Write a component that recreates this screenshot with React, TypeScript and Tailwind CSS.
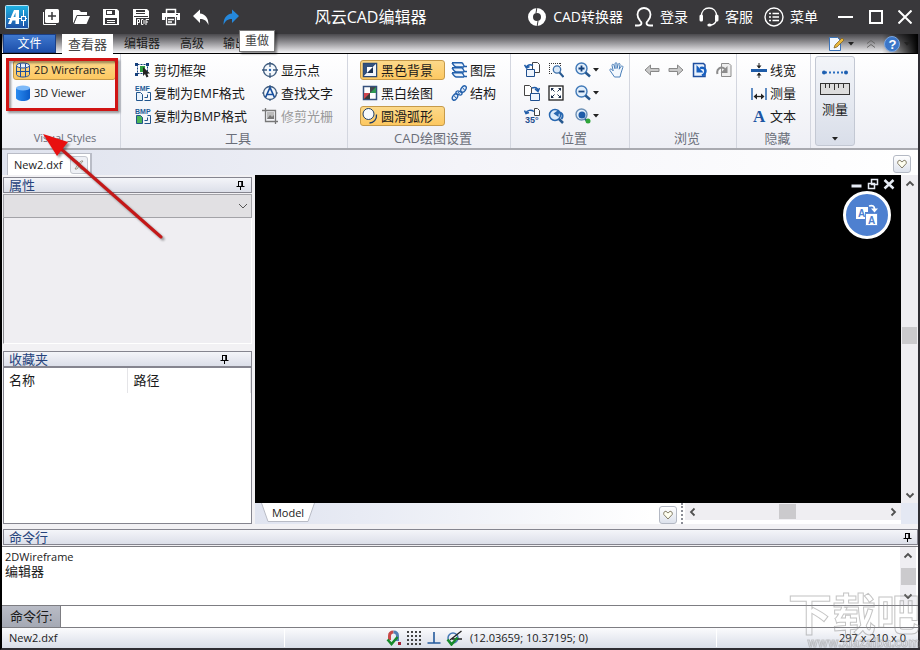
import type { ReactNode } from "react";
import clsx from "clsx";

type SvgProps = {
  size?: number;
  box?: number;
  children: ReactNode;
};

function Svg({ size = 16, box = 16, children }: SvgProps) {
  return (
    <svg width={size} height={size} viewBox={`0 0 ${box} ${box}`} fill="none" className="shrink-0" aria-hidden="true">
      {children}
    </svg>
  );
}

/* ---------- title bar icons ---------- */

const LogoIcon = () => (
  <Svg size={24} box={24}>
    <defs>
      <linearGradient id="logo" x1="0" y1="0" x2="0" y2="1">
        <stop offset="0" stopColor="#1fb4e4" />
        <stop offset="1" stopColor="#1c4fa6" />
      </linearGradient>
    </defs>
    <rect x="0.5" y="0.5" width="23" height="23" rx="1" fill="url(#logo)" stroke="#bfe3f5" />
    <path d="M3 19 9 5h5v14h-3.500v-3.500H7.500L6 19z" fill="#fff" />
    <path d="M8.500 12l2-4.500V12z" fill="#2492cf" />
    <path d="M3 13.500h19M18.500 5v16" stroke="#fff" />
    <rect x="16.500" y="11.500" width="4" height="4" stroke="#fff" fill="#2275c2" />
  </Svg>
);

const NewIcon = () => (
  <Svg size={18} box={18}>
    <rect x="3" y="1" width="14" height="14" rx="1.500" fill="#fff" />
    <path d="M1.500 4v12.500H14" stroke="#fff" />
    <path d="M10 4v8M6 8h8" stroke="#39383b" strokeWidth="1.500" />
  </Svg>
);

const OpenIcon = () => (
  <Svg size={20} box={20}>
    <path d="M2 17V3h6l2 2h6v3H6z" fill="#fff" />
    <path d="M6 9h13l-3.500 8H3z" fill="#fff" />
    <path d="M2.500 17 6 8.500h12" stroke="#39383b" strokeWidth="0.800" />
  </Svg>
);

const SaveIcon = () => (
  <Svg>
    <path d="M0 0h14l2 2v14H0z" fill="#fff" />
    <path d="M3 1h9v5H3zM2 9h12v6H2z" fill="#39383b" />
    <path d="M4 2h5v3H4zM4 11h8v1H4zM4 13h8v1H4z" fill="#fff" />
  </Svg>
);

const SavePdfIcon = () => (
  <Svg>
    <path d="M0 0h14l2 2v14H0z" fill="#fff" />
    <path d="M3 1h9v2H3zM3 4h9v1H3zM1 7h14v1H1zM3 9h13v7H3z" fill="#39383b" />
    <path d="M4.500 16v-5.500h2v3h-2M8.500 10.500h1.500l1 1v3l-1 1H8.500zM13 16v-5.500h3M13 13h2" stroke="#fff" />
  </Svg>
);

const PrintIcon = () => (
  <Svg size={18} box={18}>
    <path d="M4.500 6V1.500h9V6" stroke="#fff" strokeWidth="1.500" />
    <path d="M0 5h18v7h-3V9H3v3H0z" fill="#fff" />
    <path d="M4.500 9v7.500h9V9M6 11.500h6M6 14h4" stroke="#fff" strokeWidth="1.300" />
    <path d="M14 6.500h2" stroke="#39383b" />
  </Svg>
);

const ArrowIcon = ({ color, flip }: { color: string; flip?: boolean }) => (
  <Svg size={18} box={18}>
    <path
      transform={flip ? "translate(18 0) scale(-1 1)" : undefined}
      d="M1 8 8 1.500v4c5 .5 8.500 4 8.500 11.500C14.500 12.500 12 11 8 11v4z"
      fill={color}
    />
  </Svg>
);

const RingIcon = () => (
  <Svg size={20} box={20}>
    <circle cx="10" cy="10" r="6.500" stroke="#fff" strokeWidth="5" />
    <path d="M10 0 9 6M10 20l1-6" stroke="#39383b" />
  </Svg>
);

const UserIcon = () => (
  <Svg size={20} box={20}>
    <path
      d="M1 18.500h3c2 0 3.500-1 3.500-2.500 0-1-.7-1.500-1.500-2.300C4.500 12 3.500 10 3.500 7.500 3.500 3.500 6.500 1 10 1s6.500 2.500 6.500 6.500c0 2.500-1 4.500-2.500 6.200-.8.8-1.500 1.300-1.500 2.300 0 1.500 1.500 2.500 3.500 2.500h3"
      stroke="#fff"
      strokeWidth="1.800"
    />
  </Svg>
);

const HeadsetIcon = () => (
  <Svg size={20} box={20}>
    <path d="M2.500 9C2.500 4 5.500 1 10 1s7.500 3 7.500 8M17.500 13c-1 3-3 4.800-6 5" stroke="#fff" strokeWidth="1.300" />
    <rect x="0.500" y="7.500" width="3.500" height="7" rx="1.500" fill="#fff" />
    <rect x="16" y="7.500" width="3.500" height="7" rx="1.500" fill="#fff" />
    <ellipse cx="10.500" cy="18" rx="2.200" ry="1.500" fill="#fff" />
  </Svg>
);

const MenuIcon = () => (
  <Svg size={20} box={20}>
    <circle cx="10" cy="10" r="9" stroke="#fff" strokeWidth="1.400" />
    <path d="M5 6.500h2M5 10h2M5 13.500h2M8.500 6.500H15M8.500 10H15M8.500 13.500H15" stroke="#fff" strokeWidth="1.700" />
  </Svg>
);

/* ---------- ribbon icons ---------- */

const WireIcon = () => (
  <Svg>
    <path d="M1.500 3.500v9c0 1.300 3 2.500 6.500 2.500s6.500-1.200 6.500-2.500v-9M5.500 5.500V15M10.500 5.500V15M1.500 9.500h13" stroke="#1f4f9c" />
    <ellipse cx="8" cy="3.500" rx="6.500" ry="2.500" stroke="#1f4f9c" fill="#e8f0fb" />
    <path d="M5.500 1.500v4M10.500 1.500v4" stroke="#1f4f9c" />
  </Svg>
);

const CylinderIcon = () => (
  <Svg>
    <defs>
      <linearGradient id="cyl" x1="0" x2="1">
        <stop offset="0" stopColor="#2a8bf0" />
        <stop offset="1" stopColor="#0c5cc8" />
      </linearGradient>
    </defs>
    <path d="M1 3v10c0 1.500 3 3 7 3s7-1.500 7-3V3z" fill="url(#cyl)" />
    <ellipse cx="8" cy="3" rx="7" ry="2.500" fill="#7db9f8" />
  </Svg>
);

const ClipFrameIcon = () => (
  <Svg>
    <path d="M2.500 2.500h10v9h-10z" stroke="#143f7c" strokeDasharray="2 1" />
    <path d="M0 1h3v3H0zM11 1h3v3h-3zM0 11h3v3H0z" fill="#143f7c" />
    <path d="M5 4h5v6H5z" fill="#2e9e3f" />
    <path d="M8 5v9l2-2 1.500 3.500 2-1L12 11.500h3z" fill="#222" />
  </Svg>
);

const CopyFormatIcon = ({ label, fill }: { label: string; fill: string }) => (
  <Svg>
    <text x="0" y="6" fontSize="7" fontWeight="bold" fontFamily="Liberation Sans" fill="#1b5a96">
      {label}
    </text>
    <path d="M1.500 7.500v8h6v-6l-2-2z" fill={fill} stroke="#20548c" />
    <path d="M9.500 15.500h6v-8h-3" stroke="#20548c" />
    <path d="M9.500 12.500h3v-3" stroke="#20548c" />
  </Svg>
);

const ShowPointIcon = () => (
  <Svg>
    <circle cx="8" cy="8" r="6.500" stroke="#3d5a7d" strokeWidth="1.300" fill="#f4f8fc" />
    <path d="M8 0v5M8 11v5M0 8h5M11 8h5" stroke="#3d5a7d" strokeWidth="1.300" />
    <circle cx="8" cy="8" r="1.200" fill="#1b62b8" />
  </Svg>
);

const FindTextIcon = () => (
  <Svg>
    <circle cx="8" cy="8" r="6.500" stroke="#3d5a7d" strokeWidth="1.300" fill="#f4f8fc" />
    <path d="M8 0v2M8 14v2M0 8h2M14 8h2" stroke="#3d5a7d" />
    <path d="M3.500 12.500 8 2.500l4.500 10M5 9.500h6" stroke="#174f9e" strokeWidth="1.700" />
  </Svg>
);

const CropIcon = () => (
  <Svg>
    <path d="M3.500 0v13.500H16M0 2.500h13.500V16" stroke="#777" strokeWidth="1.300" />
    <path d="M5 4h7v7H5z" fill="#bbb" />
    <path d="m5 11 3-4 2 2 2-2v4z" fill="#777" />
  </Svg>
);

const BlackBgIcon = () => (
  <Svg>
    <rect x="1.500" y="1.500" width="13" height="13" fill="#fff" stroke="#2c4a76" strokeWidth="1.500" />
    <path d="M2 2h12L2 14z" fill="#34527e" />
    <path d="M14 2v12H2z" fill="#f2f5fa" />
    <path d="M5 5h6l-6 6z" fill="#fff" />
    <path d="M11 5v6H5z" fill="#1c3152" />
  </Svg>
);

const BlackWhiteIcon = () => (
  <Svg>
    <rect x="1.500" y="1.500" width="13" height="13" fill="#fff" stroke="#35507c" strokeWidth="1.500" />
    <path d="M2 8h6v6H2z" fill="#3a3a3a" />
    <path d="M8 8V2h6v6z" fill="#2f9a55" />
    <path d="M8 2h6L8 8z" fill="#44484c" />
    <path d="M2 8h6l-6 6z" fill="#d0454e" />
  </Svg>
);

const ArcIcon = () => (
  <Svg>
    <circle cx="6.500" cy="6" r="5.500" stroke="#1f3e68" fill="#f6fafe" />
    <path d="M14.500 6.500c.5 5-3 8.500-7 8.500" stroke="#1f3e68" strokeWidth="1.300" />
  </Svg>
);

const LayersIcon = () => (
  <Svg>
    {[0, 5, 10].map((y) => (
      <path
        key={y}
        transform={`translate(0 ${y})`}
        d="M1 .7h9.500c1 0 1.500.8 2 2l.8 1.800H16M13 5H5.500C3.500 5 2.500 3.500 1 .7"
        fill="#e3eefb"
        stroke="#2360ab"
        strokeWidth="1.400"
      />
    ))}
  </Svg>
);

const StructureIcon = () => (
  <Svg>
    <ellipse cx="4" cy="12" rx="3.500" ry="2.200" transform="rotate(-55 4 12)" fill="#dfeafa" stroke="#2360ab" strokeWidth="1.300" />
    <ellipse cx="8" cy="8" rx="3.200" ry="1.800" transform="rotate(20 8 8)" fill="#dfeafa" stroke="#2360ab" strokeWidth="1.300" />
    <ellipse cx="12.500" cy="4" rx="3.500" ry="2.200" transform="rotate(-55 12.500 4)" fill="#dfeafa" stroke="#2360ab" strokeWidth="1.300" />
    <path d="m3 10.500 2 2.500M7 7l1.500 2M11.500 2.500l2 2.500" stroke="#2360ab" />
  </Svg>
);

const RotateLeftIcon = () => (
  <Svg>
    <path d="M8.500.5h5l2 2v8h-7z" fill="#fff" stroke="#444" />
    <path d="M2.500 7.500h8v7h-8z" fill="#eef4fc" stroke="#1f4f8f" />
    <path d="M9 3.500C6 2 3 3 2.500 5M.5 3 2.500 6l3-1.500" stroke="#1f5ca8" strokeWidth="1.500" />
  </Svg>
);

const RotateRightIcon = () => (
  <Svg>
    <path d="M.5.500h5l2 2v8h-7z" fill="#fff" stroke="#444" />
    <path d="M6.500 8.500h9v7h-9z" fill="#eef4fc" stroke="#1f4f8f" />
    <path d="M8 3c3-1.500 5.500 0 6 2.500M11 4l3 2.500L15.500 3" stroke="#1f5ca8" strokeWidth="1.500" />
  </Svg>
);

const RotateAngleIcon = () => (
  <Svg>
    <path d="M10.500.500h3l2 2v5h-5z" fill="#fff" stroke="#444" />
    <path d="M10 3.500C7 1.500 3 2 2 5M.5 2.500l1.500 3 3-1" stroke="#1f5ca8" strokeWidth="1.500" />
    <text x="1" y="15" fontSize="9" fontWeight="bold" fontFamily="Liberation Sans" fill="#1f4f8f">
      35°
    </text>
  </Svg>
);

const ZoomAreaIcon = () => (
  <Svg>
    <path d="M1 1.500h12M1.500 1v11M1 11.500h4M12.500 1v3" stroke="#333" strokeDasharray="1 1" />
    <circle cx="9" cy="7.500" r="3.700" fill="#d9e8f8" stroke="#3d6fa8" strokeWidth="1.300" />
    <path d="m11.500 10.500 4 4.500" stroke="#27588f" strokeWidth="2" />
  </Svg>
);

const FitIcon = () => (
  <Svg>
    <rect x="1" y="1" width="14" height="14" fill="#fff" stroke="#222" strokeWidth="1.300" />
    <path d="M3 3h3L3 6zM13 3v3l-3-3zM3 13v-3l3 3zM13 13h-3l3-3z" fill="#1b2f4c" />
    <path d="m4 4 2.500 2.500M12 4 9.500 6.500M4 12l2.500-2.500M12 12 9.500 9.500" stroke="#1b2f4c" />
  </Svg>
);

const ZoomPrevIcon = () => (
  <Svg>
    <circle cx="7" cy="7" r="5.500" fill="#dbeafa" stroke="#2767b0" strokeWidth="1.500" />
    <path d="m11 11 4 4" stroke="#27588f" strokeWidth="2.500" />
    <path d="M13.500 11c2.500-4 0-7.500-4-6" stroke="#2767b0" strokeWidth="2" />
    <path d="M11 1.500 5.500 5.500 10.500 9z" fill="#2767b0" />
  </Svg>
);

const ZoomIcon = ({ plus }: { plus?: boolean }) => (
  <Svg>
    <circle cx="6.500" cy="6.500" r="5.500" fill="#e3effb" stroke="#4079b8" strokeWidth="1.400" />
    <path d="m10.500 10.500 4.500 4" stroke="#27588f" strokeWidth="2.500" />
    <path d={plus ? "M3.500 6.500h6M6.500 3.500v6" : "M3.500 6.500h6"} stroke="#123f7a" strokeWidth="1.800" />
  </Svg>
);

const OrbitIcon = () => (
  <Svg>
    <circle cx="6.500" cy="6.500" r="5.500" fill="#e3effb" stroke="#6b8fb5" strokeWidth="1.400" />
    <circle cx="7" cy="7" r="3.500" fill="#1f5ca8" />
    <path d="m10 11 3 3" stroke="#27588f" strokeWidth="2" />
    <circle cx="13" cy="13" r="2.500" fill="#2fa53a" />
  </Svg>
);

const HandIcon = () => (
  <Svg>
    <path
      d="M5.500 15 1 8.500c-.8-1.500 1-2 2-.8l1.200 1.200L3 3.500c-.2-1.500 1.500-1.700 2-.3l1 3.500V1.800c0-1.500 2-1.500 2 0v4.700l1.200-4.200c.4-1.400 2.200-1 1.800.5l-.8 4.400 1.700-2.700c.9-1.200 2.500-.4 1.900 1L12 11l-1 4z"
      fill="#f3f8fe"
      stroke="#4a7fb9"
    />
  </Svg>
);

const NavArrowIcon = ({ right }: { right?: boolean }) => (
  <Svg>
    <path
      transform={right ? "translate(16 0) scale(-1 1)" : undefined}
      d="M1 8 6.500 3v3.500H15v3H6.500V13z"
      fill="#c9c9c9"
      stroke="#888"
    />
  </Svg>
);

const PageUndoIcon = ({ disabled }: { disabled?: boolean }) => (
  <Svg>
    {disabled ? (
      <>
        <path d="M5.500 1.500h7.500l2 2v11H5.500z" fill="#eee" stroke="#8c8c8c" />
        <path d="M1.500 12C0 7 5 3.500 9 7" stroke="#8c8c8c" strokeWidth="2" />
        <path d="M11.500 4v7h-7z" fill="#8c8c8c" />
      </>
    ) : (
      <>
        <path d="M1.500 1.500h10l1.500 1.500v11.500H1.500z" fill="#eaf2fd" stroke="#1f4fa0" strokeWidth="1.500" />
        <path d="M10 13.500c5-2.500 5-9-2-7.500" stroke="#1760c0" strokeWidth="2.300" />
        <path d="M4.500 3v7.500h7z" fill="#1760c0" />
      </>
    )}
  </Svg>
);

const LineWidthIcon = () => (
  <Svg>
    <path d="M0 7h16v3H0z" fill="#1f5ca8" />
    <path d="M8 1v5M8 16v-5" stroke="#222" />
    <path d="M5.500 3.500h5L8 6.500zM5.500 13.500h5L8 10.500z" fill="#222" />
  </Svg>
);

const MeasureIcon = () => (
  <Svg>
    <path d="M1 3v12M15 3v12" stroke="#2a67b0" strokeWidth="1.500" />
    <path d="M4 11.500h8" stroke="#222" strokeWidth="1.300" />
    <path d="M2.500 11.500 6 8.500v6zM13.500 11.500 10 8.500v6z" fill="#222" />
  </Svg>
);

const TextIcon = () => (
  <Svg>
    <text x="2" y="14" fontSize="17" fontWeight="bold" fontFamily="Liberation Serif" fill="#1c56a3">
      A
    </text>
  </Svg>
);

const RulerIcon = () => (
  <svg width="30" height="26" viewBox="0 0 30 26" fill="none" aria-hidden="true">
    <path d="M5 3.500h21" stroke="#2a6fc0" strokeWidth="2" strokeDasharray="2 2" />
    <circle cx="4" cy="3.500" r="2" fill="#1d5fb0" />
    <circle cx="26" cy="3.500" r="2" fill="#1d5fb0" />
    <rect x="0.500" y="14.500" width="29" height="11" fill="#ddd" stroke="#333" />
    <path d="M5.500 15v4M9.500 15v4M14.500 15v6M18.500 15v4M23.500 15v4" stroke="#333" />
  </svg>
);

const Caret = () => (
  <svg width="6" height="4" viewBox="0 0 6 4" className="shrink-0" aria-hidden="true">
    <path d="M0 0h6L3 3.500z" fill="#222" />
  </svg>
);

const PinIcon = () => (
  <Svg size={9} box={9}>
    <path d="M2.500 0v5.500M6 0v5.500M2 .5h4.500M.5 5.500h8M4.500 6v3" stroke="#000" />
    <path d="M5.500 0h1.500v5H5.500z" fill="#000" />
  </Svg>
);

const Chevron = ({ dir }: { dir: "up" | "down" | "left" | "right" }) => {
  const paths = {
    up: "M1.500 6.500 5 3l3.500 3.500",
    down: "M1.500 3.500 5 7l3.500-3.500",
    left: "M6.500 1.500 3 5l3.500 3.500",
    right: "M3.500 1.500 7 5 3.500 8.500",
  };
  return (
    <Svg size={10} box={10}>
      <path d={paths[dir]} stroke="#505050" strokeWidth="1.800" />
    </Svg>
  );
};

const HeartButton = ({ label }: { label: string }) => (
  <button
    type="button"
    aria-label={label}
    className="flex size-[18px] items-center justify-center rounded-[3px] border border-[#b4b9c4] bg-linear-to-b from-white to-[#dde2ec]"
  >
    <Svg size={10} box={10}>
      <path d="M5 9 .8 4.500C.3 2.500 1.500 1 3 1.300L5 3l2-1.700c1.500-.3 2.700 1.200 2.200 3.200z" fill="#fffff0" stroke="#77705a" strokeWidth="0.900" />
    </Svg>
  </button>
);

/* ---------- building blocks ---------- */

type ToolProps = {
  icon: ReactNode;
  label: string;
  active?: boolean;
  disabled?: boolean;
};

function Tool({ icon, label, active, disabled }: ToolProps) {
  return (
    <button
      type="button"
      disabled={disabled}
      className={clsx(
        "flex h-5 items-center gap-[3px] rounded-[3px] border px-px",
        active ? "border-[#c69a4a] bg-linear-to-b from-[#fcd98a] to-[#fdc860]" : "border-transparent",
        disabled && "text-[#9a9a9a]",
      )}
    >
      {icon}
      <span>{label}</span>
    </button>
  );
}

function IconTool({ icon, label, menu }: { icon: ReactNode; label: string; menu?: boolean }) {
  return (
    <button type="button" aria-label={label} className="flex h-5 items-center gap-0.5">
      {icon}
      {menu && <Caret />}
    </button>
  );
}

function Group({ title, className, children }: { title: string; className: string; children: ReactNode }) {
  return (
    <section aria-label={title} className={clsx("flex shrink-0 flex-col border-r border-[#d3d6df] pt-1.5", className)}>
      <div className="flex h-[66px] items-start">{children}</div>
      <div className="mt-0.5 h-5 pl-2 text-center leading-5 text-[#6a6e79]">{title}</div>
    </section>
  );
}

const Column = ({ className, children }: { className?: string; children: ReactNode }) => (
  <div className={clsx("flex flex-col gap-[3px]", className)}>{children}</div>
);

function PanelHeader({ id, title, pin }: { id: string; title: string; pin: string }) {
  return (
    <div
      className={clsx(
        "flex h-4 shrink-0 items-center justify-between border border-[#85858f] bg-linear-to-b from-[#f4f5f9] to-[#dcdfe9] pl-[5px] leading-[14px] text-[#27447c]",
        pin,
      )}
    >
      <h2 id={id}>{title}</h2>
      <button type="button" aria-label={`固定${title}`}>
        <PinIcon />
      </button>
    </div>
  );
}

function TitleBar() {
  const files = [
    { label: "新建", icon: <NewIcon /> },
    { label: "打开", icon: <OpenIcon /> },
    { label: "保存", icon: <SaveIcon /> },
    { label: "保存为PDF", icon: <SavePdfIcon /> },
    { label: "打印", icon: <PrintIcon /> },
    { label: "撤销", icon: <ArrowIcon color="#fff" /> },
    { label: "重做", icon: <ArrowIcon color="#2588dc" flip /> },
  ];
  const links = [
    { label: "CAD转换器", icon: <RingIcon /> },
    { label: "登录", icon: <UserIcon /> },
    { label: "客服", icon: <HeadsetIcon /> },
    { label: "菜单", icon: <MenuIcon /> },
  ];

  return (
    <header className="flex h-[34px] shrink-0 items-center bg-[#39383b] pr-2 pl-[5px] text-white">
      <LogoIcon />
      <div className="ml-[7px] flex">
        {files.map((item) => (
          <button key={item.label} type="button" aria-label={item.label} className="flex h-6 w-[30px] items-center justify-center">
            {item.icon}
          </button>
        ))}
      </div>
      <h1 className="flex-1 pr-8 text-center text-base">风云CAD编辑器</h1>
      <nav className="flex items-center gap-[11px] text-sm">
        {links.map((item) => (
          <button key={item.label} type="button" className="flex items-center gap-1.5">
            {item.icon}
            <span>{item.label}</span>
          </button>
        ))}
      </nav>
      <div className="ml-5 flex items-center gap-[15px]">
        <button type="button" aria-label="最小化">
          <Svg>
            <path d="M0 8h15" stroke="#fff" strokeWidth="2" />
          </Svg>
        </button>
        <button type="button" aria-label="最大化">
          <Svg size={14} box={14}>
            <rect x="1" y="1" width="12" height="12" stroke="#fff" strokeWidth="2" />
          </Svg>
        </button>
        <button type="button" aria-label="关闭">
          <Svg size={14} box={14}>
            <path d="m.5.500 13 13M13.500.500l-13 13" stroke="#fff" strokeWidth="2" />
          </Svg>
        </button>
      </div>
    </header>
  );
}

function TabBar() {
  return (
    <div className="relative flex h-5 shrink-0 items-stretch border-b border-black bg-linear-to-b from-[#4a494d] to-[#f6f6f8] pl-px text-xs leading-[19px]">
      <button type="button" className="w-[53px] border border-[#1a3f86] bg-linear-to-b from-[#3f78cf] to-[#1d4faa] leading-4 text-white">
        文件
      </button>
      <button type="button" className="-mb-px ml-1.5 w-[51px] bg-white text-[13px] text-[#444]">
        查看器
      </button>
      <button type="button" className="ml-[11px]">编辑器</button>
      <button type="button" className="ml-5">高级</button>
      <button type="button" className="ml-[19px]">输出</button>
      <div
        role="tooltip"
        className="absolute -top-1 left-[237px] z-10 h-[22px] border border-[#777] bg-white px-[5px] leading-5 text-[#444] shadow-[2px_2px_2px_rgba(0,0,0,0.4)]"
      >
        重做
      </div>
      <div className="ml-auto flex items-center gap-1 bg-linear-to-r from-transparent from-60% to-black pr-2">
        <Svg>
          <path d="M1.500 1.500h8l3 3v10h-11z" fill="#f3f8ff" stroke="#3d74b8" />
          <path d="m6 12 1-3 7-7 2 2-7 7z" fill="#e9b83d" stroke="#7a5a1d" strokeWidth="0.700" />
        </Svg>
        <Caret />
        <span className="ml-2">
          <Svg size={10} box={10}>
            <path d="m1 4.500 4-3 4 3M1 8.500l4-3 4 3" stroke="#666" />
          </Svg>
        </span>
        <button type="button" aria-label="帮助" className="ml-1">
          <Svg>
            <circle cx="8" cy="8" r="7.500" fill="#3b76c8" stroke="#79a5de" />
            <text x="4.500" y="12.500" fontSize="13" fontWeight="bold" fontFamily="Liberation Sans" fill="#fff">
              ?
            </text>
          </Svg>
        </button>
        <Caret />
      </div>
    </div>
  );
}

function Ribbon() {
  return (
    <div className="flex shrink-0 overflow-hidden border-b-2 border-[#a9aab0] bg-linear-to-b from-white to-[#eeeff5]">
      <Group title="Visual Styles" className="w-[119px] text-[11px]">
        <Column className="ml-[11px] w-[103px]">
          <Tool icon={<WireIcon />} label="2D Wireframe" active />
          <Tool icon={<CylinderIcon />} label="3D Viewer" />
        </Column>
      </Group>
      <Group title="工具" className="w-[227px]">
        <Column className="ml-3 w-[127px]">
          <Tool icon={<ClipFrameIcon />} label="剪切框架" />
          <Tool icon={<CopyFormatIcon label="EMF" fill="#e9f2fc" />} label="复制为EMF格式" />
          <Tool icon={<CopyFormatIcon label="BMP" fill="#4bb457" />} label="复制为BMP格式" />
        </Column>
        <Column>
          <Tool icon={<ShowPointIcon />} label="显示点" />
          <Tool icon={<FindTextIcon />} label="查找文字" />
          <Tool icon={<CropIcon />} label="修剪光栅" disabled />
        </Column>
      </Group>
      <Group title="CAD绘图设置" className="w-[163px]">
        <Column className="ml-3 w-[85px]">
          <Tool icon={<BlackBgIcon />} label="黑色背景" active />
          <Tool icon={<BlackWhiteIcon />} label="黑白绘图" />
          <Tool icon={<ArcIcon />} label="圆滑弧形" active />
        </Column>
        <Column className="ml-1">
          <Tool icon={<LayersIcon />} label="图层" />
          <Tool icon={<StructureIcon />} label="结构" />
        </Column>
      </Group>
      <Group title="位置" className="w-[119px]">
        <Column className="ml-[13px]">
          <IconTool icon={<RotateLeftIcon />} label="向左旋转" />
          <IconTool icon={<RotateRightIcon />} label="向右旋转" />
          <IconTool icon={<RotateAngleIcon />} label="旋转35°" />
        </Column>
        <Column className="ml-2">
          <IconTool icon={<ZoomAreaIcon />} label="窗口缩放" />
          <IconTool icon={<FitIcon />} label="适合窗口" />
          <IconTool icon={<ZoomPrevIcon />} label="上一视图" />
        </Column>
        <Column className="ml-[11px]">
          <IconTool icon={<ZoomIcon plus />} label="放大" menu />
          <IconTool icon={<ZoomIcon />} label="缩小" menu />
          <IconTool icon={<OrbitIcon />} label="旋转视图" menu />
        </Column>
        <Column className="ml-2.5">
          <IconTool icon={<HandIcon />} label="平移" />
        </Column>
      </Group>
      <Group title="浏览" className="w-[107px]">
        <div className="ml-[14px] flex gap-2">
          <IconTool icon={<NavArrowIcon />} label="后退" />
          <IconTool icon={<NavArrowIcon right />} label="前进" />
          <IconTool icon={<PageUndoIcon />} label="还原" />
          <IconTool icon={<PageUndoIcon disabled />} label="重新载入" />
        </div>
      </Group>
      <Group title="隐藏" className="w-[74px]">
        <Column className="ml-3">
          <Tool icon={<LineWidthIcon />} label="线宽" />
          <Tool icon={<MeasureIcon />} label="测量" />
          <Tool icon={<TextIcon />} label="文本" />
        </Column>
      </Group>
      <button
        type="button"
        className="my-0.5 ml-1 flex w-10 flex-col items-center rounded-[3px] border border-[#c3c8d3] bg-linear-to-b from-[#f3f5f9] to-[#d9dee9] pt-3"
      >
        <RulerIcon />
        <span className="mt-1.5">测量</span>
        <span className="mt-auto mb-1">
          <Caret />
        </span>
      </button>
    </div>
  );
}

function SidePanels() {
  return (
    <aside className="flex w-[249px] shrink-0 flex-col pt-0.5">
      <PanelHeader id="props-title" title="属性" pin="pr-1.5" />
      <div className="relative mt-px h-6 shrink-0">
        <select aria-labelledby="props-title" className="h-full w-full appearance-none border border-[#a3a3a8] bg-[#e1e0e3] px-1">
          <option></option>
        </select>
        <span className="pointer-events-none absolute top-[7px] right-1">
          <svg width="10" height="10" viewBox="0 0 10 10" fill="none" aria-hidden="true">
            <path d="m1 3 4 4 4-4" stroke="#555" />
          </svg>
        </span>
      </div>
      <div className="min-h-0 flex-[126] border-r border-b border-l border-white border-l-[#8a8a8f] bg-[#efeef2]" />
      <div className="mt-[7px] flex min-h-0 flex-[174] flex-col">
        <PanelHeader id="favorites-title" title="收藏夹" pin="pr-[22px]" />
        <div className="min-h-0 flex-1 border border-[#85858f] bg-white">
          <table aria-labelledby="favorites-title" className="w-full table-fixed text-left leading-[25px]">
            <thead>
              <tr>
                <th className="w-[123px] border-r border-[#e5e5e8] pl-[5px] font-normal">名称</th>
                <th className="border-r border-[#e5e5e8] pl-1.5 font-normal">路径</th>
              </tr>
            </thead>
          </table>
        </div>
      </div>
    </aside>
  );
}

function Viewport() {
  return (
    <main className="flex min-w-0 flex-1 flex-col">
      <div className="flex min-h-0 flex-1">
        <div className="flex flex-1 flex-col items-end bg-black pt-[3px] pr-1.5">
          <div className="flex gap-1">
            <button type="button" aria-label="最小化图纸">
              <Svg size={12} box={12}>
                <path d="M.5 6.500h10v3H.5z" fill="#e6ebf4" />
              </Svg>
            </button>
            <button type="button" aria-label="还原图纸">
              <Svg size={12} box={12}>
                <path d="M4.500 1.500h6v5h-6zM1.500 5.500h6v5h-6z" fill="#000" stroke="#e6ebf4" strokeWidth="1.500" />
              </Svg>
            </button>
            <button type="button" aria-label="关闭图纸">
              <Svg size={12} box={12}>
                <path d="m1.500 2 9 8.500M10.500 2l-9 8.500" stroke="#e6ebf4" strokeWidth="2.500" />
              </Svg>
            </button>
          </div>
          <button
            type="button"
            aria-label="翻译"
            className="mt-px mr-1 flex size-12 items-center justify-center rounded-full border-3 border-white bg-[#4e80d0]"
          >
            <Svg size={24} box={24}>
              <path d="M1 4h12v5h-3v7H1z" fill="#fff" />
              <path d="M10.500 10.500h12v12h-12z" fill="#fff" stroke="#4e80d0" strokeWidth="0.800" />
              <path d="M14 3c3.500-1 5.500 0 5.500 3" stroke="#fff" strokeWidth="1.800" />
              <path d="M16 5.500h7l-3.500 4z" fill="#fff" />
              <text x="3" y="13.500" fontSize="10" fontWeight="bold" fontFamily="Liberation Sans" fill="#4e80d0">A</text>
              <text x="13" y="20.500" fontSize="10" fontWeight="bold" fontFamily="Liberation Sans" fill="#4e80d0">A</text>
            </Svg>
          </button>
        </div>
        <div className="flex w-[17px] flex-col items-center justify-between bg-[#efeef2] pt-1 pb-[3px]">
          <Chevron dir="up" />
          <div className="h-[17px] w-[15px] -translate-y-1 bg-[#cbcacd]" />
          <Chevron dir="down" />
        </div>
      </div>
      <div className="flex h-[21px] shrink-0 bg-linear-to-r from-[#e0e4f0] to-white to-60%">
        <button type="button" className="relative ml-1.5 h-[19px] w-[54px] text-[11px] leading-4">
          <svg width="54" height="19" viewBox="0 0 54 19" className="absolute inset-0" aria-hidden="true">
            <path d="M.5 0 7 18.500h40L53.500 0" fill="#fff" stroke="#b9bcc6" />
          </svg>
          <span className="relative">Model</span>
        </button>
        <div className="mt-[3px] ml-auto">
          <HeartButton label="布局列表" />
        </div>
        <div className="ml-1 w-0 border-l-2 border-dotted border-[#8b8d96]" />
        <div className="ml-0.5 flex h-[17px] w-[216px] items-center justify-between bg-[#efeef2] px-[3px]">
          <Chevron dir="left" />
          <div className="h-[15px] w-[17px] -translate-x-1.5 bg-[#cbcacd]" />
          <Chevron dir="right" />
        </div>
        <div className="w-[17px] bg-[#e4e8f3]" />
      </div>
    </main>
  );
}

function CommandPanel() {
  return (
    <section className="mt-[5px] flex shrink-0 flex-col">
      <div className="flex flex-col pl-px">
        <PanelHeader id="command-title" title="命令行" pin="pr-[5px]" />
      </div>
      <div className="mt-px flex h-[60px] border-y border-[#7d7d82] bg-white">
        <div className="flex-1 pt-[3px] pl-[3px] leading-[14px]">
          <p className="text-[11px] leading-[14px]">2DWireframe</p>
          <p>编辑器</p>
        </div>
        <div className="mr-0.5 flex w-4 flex-col items-center justify-between bg-[#efeef2] py-1">
          <Chevron dir="up" />
          <div className="h-[17px] w-[15px] bg-[#cbcacd]" />
          <Chevron dir="down" />
        </div>
      </div>
      <div className="flex h-[22px] border-b border-[#7d7d82]">
        <label htmlFor="command" className="w-[59px] border-r border-[#7d7d82] bg-linear-to-b from-[#b9bcc6] to-[#a5a9b4] pl-2 leading-5">
          命令行:
        </label>
        <input id="command" className="min-w-0 flex-1 bg-white px-1 outline-none" />
      </div>
    </section>
  );
}

function StatusBar() {
  return (
    <footer className="flex h-5 shrink-0 items-center bg-linear-to-b from-[#fbfbfd] to-[#d9dee8] text-[11px] leading-[18px]">
      <span className="w-[283px] border-r border-white pl-[7px]">New2.dxf</span>
      <div className="ml-[101px] flex items-center gap-1">
        <button type="button" aria-label="捕捉">
          <Svg>
            <path d="M3.500 10V6c0-2.500 1.500-4 4-4" stroke="#c94a4a" strokeWidth="3" />
            <path d="M7.500 2c2.500 0 4 1.500 4 4v5" stroke="#5580b5" strokeWidth="3" />
            <path d="m1.500 9.500 4 4.500 6-7" stroke="#168a2a" strokeWidth="2.500" />
            <path d="M12 12h3v3h-3z" fill="#a02035" />
          </Svg>
        </button>
        <button type="button" aria-label="栅格">
          <Svg>
            <path
              d="M1 1h2v2H1zM5 1h2v2H5zM9 1h2v2H9zM13 1h2v2h-2zM1 5h2v2H1zM5 5h2v2H5zM9 5h2v2H9zM13 5h2v2h-2zM1 9h2v2H1zM5 9h2v2H5zM9 9h2v2H9zM13 9h2v2h-2zM1 13h2v2H1zM5 13h2v2H5zM9 13h2v2H9zM13 13h2v2h-2z"
              fill="#444"
            />
          </Svg>
        </button>
        <button type="button" aria-label="正交">
          <Svg>
            <path d="M8 2v11M1.500 13h13" stroke="#235a9c" strokeWidth="1.600" />
          </Svg>
        </button>
        <button type="button" aria-label="对象捕捉">
          <Svg>
            <circle cx="7" cy="8" r="5" stroke="#4679b5" strokeWidth="1.500" />
            <path d="M4 10 15.500 1M6 9h10" stroke="#222" strokeWidth="1.300" />
            <path d="m1.500 9.500 4 5 6-7" stroke="#168a2a" strokeWidth="2.500" />
          </Svg>
        </button>
      </div>
      <span className="ml-2">(12.03659; 10.37195; 0)</span>
      <span className="ml-auto w-[202px] border-l border-white pr-3 text-right">297 x 210 x 0</span>
    </footer>
  );
}

/* red frame and arrow pointing at the visual styles */
function Callout() {
  return (
    <svg
      width="180"
      height="250"
      viewBox="0 0 180 250"
      fill="none"
      className="pointer-events-none absolute top-0 left-0 z-20 drop-shadow-[2px_2px_1px_rgba(0,0,0,0.4)]"
      aria-hidden="true"
    >
      <rect x="7.500" y="59.500" width="109" height="50" stroke="#d01414" strokeWidth="3" />
      <path d="M161 237 60 148" stroke="#c41818" strokeWidth="3" strokeLinecap="round" />
      <path d="m43 134 25 8-11 14z" fill="#e81010" />
    </svg>
  );
}

function Watermark() {
  return (
    <div className="pointer-events-none absolute right-0 bottom-0 z-20 text-right opacity-50" aria-hidden="true">
      <div className="text-[44px] leading-[44px] font-bold text-transparent [-webkit-text-stroke:1px_#8a8a8a]">下载吧</div>
      <div className="text-xs leading-[14px] font-bold text-transparent [-webkit-text-stroke:1px_#9a9a9a]">www.xiazaiba.com</div>
    </div>
  );
}

export default function App() {
  return (
    <div className="relative flex h-screen flex-col overflow-hidden bg-[#f2f1f4] font-['Open_Sans','Noto_Sans_CJK_SC',sans-serif] text-[13px] leading-4 whitespace-nowrap text-[#1a1a1a]">
      <TitleBar />
      <div className="flex min-h-0 flex-1 flex-col border-r-2 border-b-2 border-l-2 border-[#2e2d33] border-l-black">
        <TabBar />
        <Ribbon />
        <div className="flex h-[25px] shrink-0 items-end bg-linear-to-r from-[#dfe3ee] via-[#f4f4f9] to-white pl-[5px]">
          <div className="flex h-[22px] items-center gap-2 border-t border-r-2 border-l border-[#b9bcc6] bg-white pr-0.5 pl-1.5 text-[11px]">
            New2.dxf
            <button type="button" aria-label="关闭New2.dxf" className="flex size-[18px] items-center justify-center rounded-[3px] border border-[#c4c7cf] bg-[#eef0f5]">
              <Svg size={10} box={10}>
                <path d="m1 1 3 3.500L1 9l2 0 2-3 2 3h2L6 4.500 9 1H7L5 3.500 3 1z" fill="#fff" stroke="#8a8370" strokeWidth="0.800" />
              </Svg>
            </button>
          </div>
          <div className="mr-[7px] mb-0.5 ml-auto">
            <HeartButton label="文档列表" />
          </div>
        </div>
        <div className="flex min-h-0 flex-1 gap-[3px] pl-px">
          <SidePanels />
          <Viewport />
        </div>
        <CommandPanel />
        <StatusBar />
      </div>
      <Callout />
      <Watermark />
    </div>
  );
}
